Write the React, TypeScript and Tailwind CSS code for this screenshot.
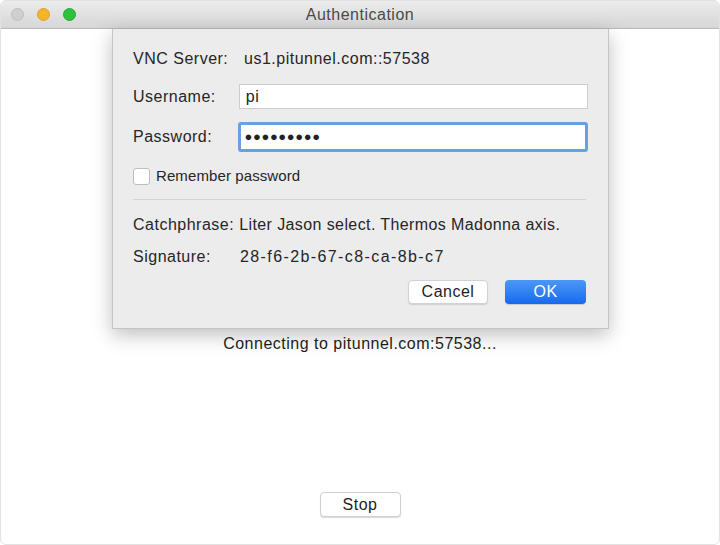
import React from "react";

const font = { fontFamily: '"Liberation Sans", Arial, sans-serif' };

export default function App() {
  return (
    <div
      className="w-[720px] h-[545px] bg-white overflow-hidden relative text-[16px] tracking-[0.5px] text-[#262626]"
      style={font}
    >
      <div className="w-full h-full rounded-[6px] border border-[#e2e2e2] bg-white flex flex-col overflow-hidden">
        {/* Title bar */}
        <div className="h-[28px] shrink-0 bg-gradient-to-b from-[#ececec] to-[#d6d6d6] border-b border-[#b9b9b9] flex items-center relative">
          <div className="flex items-center gap-[13px] pl-[10px]">
            <span className="w-[13px] h-[13px] rounded-full bg-[#cfcfcf] border border-[#bdbdbd]" />
            <span className="w-[13px] h-[13px] rounded-full bg-[#f6b42b] border border-[#e0a027]" />
            <span className="w-[13px] h-[13px] rounded-full bg-[#2dc13d] border border-[#25a834]" />
          </div>
          <div className="absolute inset-0 flex items-center justify-center text-[#4a4a4a] text-[16px]">
            Authentication
          </div>
        </div>

        {/* Window content */}
        <div className="flex-1 flex flex-col items-center relative">
          <div className="mt-[304px] h-[22px] flex items-center text-[#1e1e1e]">
            Connecting to pitunnel.com:57538...
          </div>
          <button className="mt-[137px] w-[81px] h-[25px] bg-white border border-[#cfcfcf] rounded-[4px] shadow-[0_1px_1px_rgba(0,0,0,0.15)] text-[#1e1e1e] flex items-center justify-center">
            Stop
          </button>

          {/* Sheet */}
          <div className="absolute top-0 left-[111px] w-[497px] h-[300px] bg-[#ececec] border-l border-r border-b border-[#c4c4c4] shadow-[0_6px_18px_rgba(0,0,0,0.25)] px-[20px] pt-[20px] flex flex-col">
            <div className="h-[20px] flex items-center">
              <span className="w-[111px]">VNC Server:</span>
              <span>us1.pitunnel.com::57538</span>
            </div>
            <div className="mt-[15px] h-[25px] flex items-center">
              <span className="w-[106px]">Username:</span>
              <div className="w-[350px] h-[25px] bg-white border border-[#cdcdcd] flex items-center pl-[6px]">
                pi
              </div>
            </div>
            <div className="mt-[13px] h-[30px] flex items-center">
              <span className="w-[105px]">Password:</span>
              <div className="w-[352px] h-[30px] bg-white border-[3px] border-[#6a9fe4] rounded-[3px] flex items-center pl-[4px] text-[13px] tracking-[0.6px] text-[#222]">
                ●●●●●●●●●
              </div>
            </div>
            <div className="mt-[15px] h-[18px] flex items-center">
              <span className="w-[17px] h-[17px] bg-white border border-[#bdbdbd] rounded-[3px] mr-[6px]" />
              <span className="text-[15px] tracking-[0.1px]">Remember password</span>
            </div>
            <div className="mt-[14px] h-px bg-[#d4d4d4] w-[453px]" />
            <div className="mt-[15px] h-[20px] flex items-center">
              <span className="mr-[5px]">Catchphrase:</span>
              <span className="tracking-[0.4px]">Liter Jason select. Thermos Madonna axis.</span>
            </div>
            <div className="mt-[12px] h-[20px] flex items-center">
              <span className="w-[107px]">Signature:</span>
              <span className="tracking-[1.4px]">28-f6-2b-67-c8-ca-8b-c7</span>
            </div>
            <div className="mt-[13px] flex justify-end gap-[17px] pr-[2px]">
              <button className="w-[80px] h-[24px] bg-white border border-[#d2d2d2] rounded-[4px] shadow-[0_1px_1px_rgba(0,0,0,0.12)] flex items-center justify-center text-[#1e1e1e]">
                Cancel
              </button>
              <button className="w-[81px] h-[24px] rounded-[4px] bg-gradient-to-b from-[#4b98f8] to-[#1669ee] text-white flex items-center justify-center shadow-[0_1px_1px_rgba(0,0,0,0.15)]">
                OK
              </button>
            </div>
          </div>
        </div>
      </div>
    </div>
  );
}
